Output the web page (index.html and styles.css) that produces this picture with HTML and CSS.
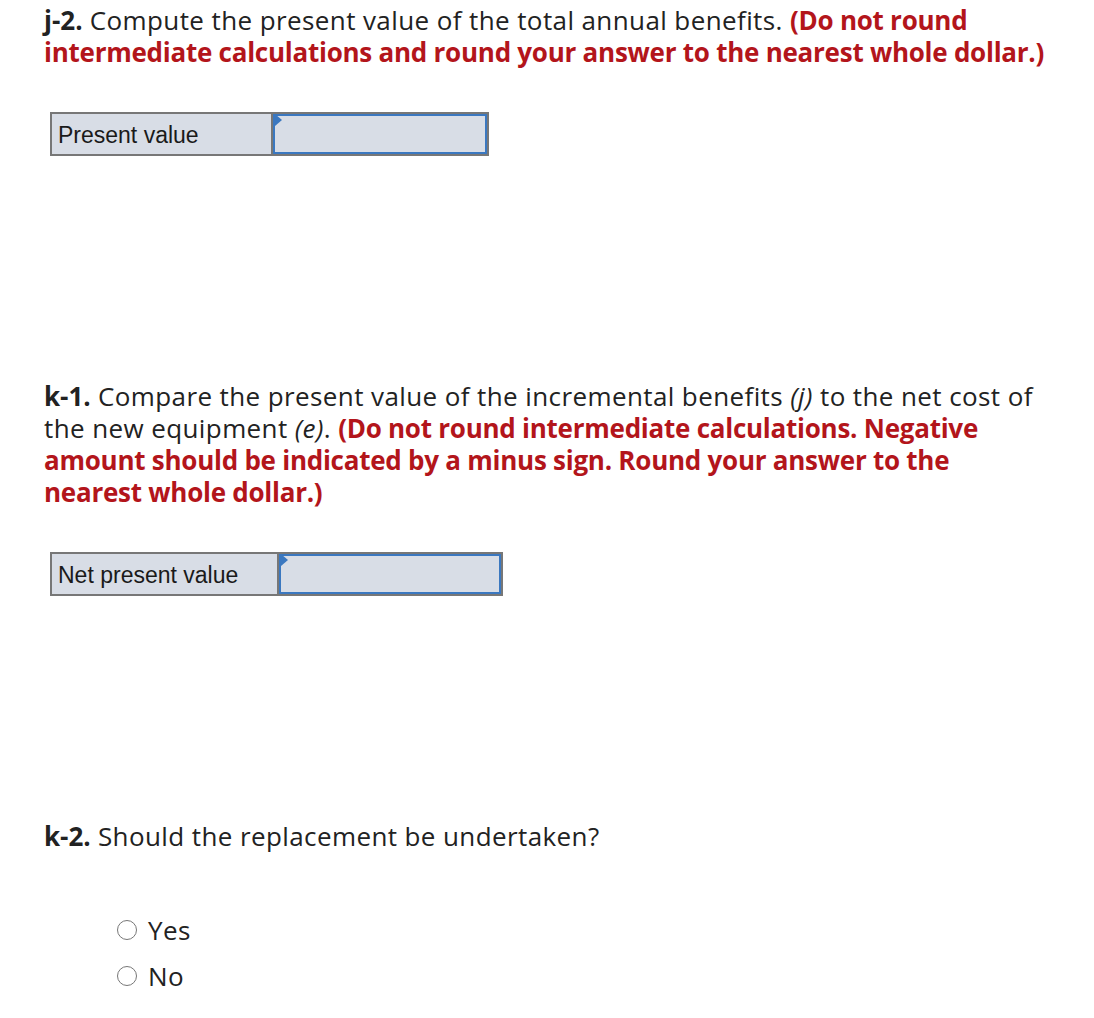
FILE: index.html
```html
<!DOCTYPE html>
<html>
<head>
<meta charset="utf-8">
<link rel="stylesheet" href="styles.css">
</head>
<body>
<div class="page">
  <p class="q"><b>j-2.</b> Compute the present value of the total annual benefits. <span class="note">(Do not round intermediate calculations and round your answer to the nearest whole dollar.)</span></p>
  <table class="ans ans-1">
    <tr>
      <td class="label">Present value</td>
      <td class="input"><div class="field"><span class="flag"></span></div></td>
    </tr>
  </table>

  <p class="q q-k1"><b>k-1.</b> Compare the present value of the incremental benefits <i>(j)</i> to the net cost of the new equipment <i>(e)</i>. <span class="note">(Do not round intermediate calculations. Negative amount should be indicated by a minus sign. Round your answer to the nearest whole dollar.)</span></p>
  <table class="ans ans-2">
    <tr>
      <td class="label">Net present value</td>
      <td class="input"><div class="field"><span class="flag"></span></div></td>
    </tr>
  </table>

  <p class="q q-k2"><b>k-2.</b> Should the replacement be undertaken?</p>
  <div class="radios">
    <label class="radio"><span class="circle"></span>Yes</label>
    <label class="radio"><span class="circle"></span>No</label>
  </div>
</div>
</body>
</html>
```

FILE: styles.css
```css
html, body {
  margin: 0;
  padding: 0;
  background: #fff;
}
.page {
  padding: 4px 0 0 44px;
  width: 1004px;
  font-family: "Open Sans", "Lato", sans-serif;
  color: #222;
}
.q {
  margin: 0;
  font-size: 26px;
  line-height: 32px;
  letter-spacing: 0.4px;
}
.q b {
  font-weight: 700;
  letter-spacing: 0;
}
.note {
  color: #b3151b;
  font-weight: 700;
  letter-spacing: -0.25px;
}
.ans {
  border-collapse: collapse;
  margin-left: 6px;
  font-family: "Liberation Sans", Arial, sans-serif;
  font-size: 23px;
  color: #1a1a1a;
}
.ans td {
  border: 2px solid #777;
  background: #d8dde6;
  padding: 0;
  height: 40px;
}
.ans .label {
  padding: 3px 0 0 6px;
  height: 37px;
}
.ans-1 {
  margin-top: 44px;
}
.ans-1 .label { width: 213px; }
.ans-1 .input { width: 214px; }
.ans-2 { margin-top: 44px; }
.ans-2 .label { width: 219px; }
.ans-2 .input { width: 222px; }
.field {
  position: relative;
  height: 36px;
  border: 2px solid #3b78c0;
}
.flag {
  position: absolute;
  left: 0;
  width: 0;
  height: 0;
  border-top: 6px solid transparent;
  border-bottom: 6px solid transparent;
  border-left: 7px solid #3b78c0;
  top: -2px;
}
.q-k1 {
  margin-top: 224px;
}
.q-k2 {
  margin-top: 224px;
}
.radios {
  display: flex;
  flex-direction: column;
  gap: 14px;
  margin: 62px 0 0 73px;
}
.radio {
  display: flex;
  align-items: center;
  gap: 11px;
  font-size: 26px;
  line-height: 32px;
  letter-spacing: 0.4px;
}
.circle {
  width: 20px;
  height: 20px;
  border: 1.5px solid #777;
  border-radius: 50%;
  box-sizing: border-box;
  background: #fff;
}
```
